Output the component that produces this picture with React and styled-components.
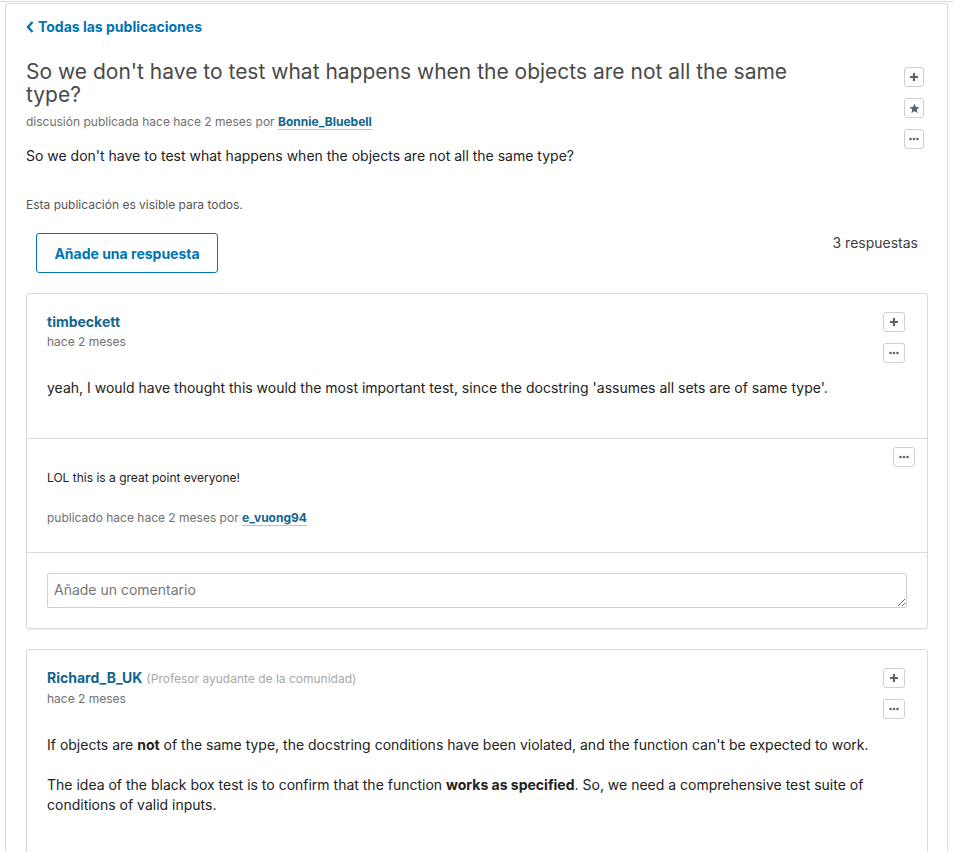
import React from 'react';
import styled, { createGlobalStyle } from 'styled-components';

const GlobalStyle = createGlobalStyle`
  body {
    margin: 0;
    background: #fff;
    font-family: Inter, 'Open Sans', sans-serif;
    color: #222;
  }
`;

const TopRule = styled.div`
  height: 1px;
  margin-top: 1px;
  background: #d9d9d9;
`;

const Page = styled.div`
  margin: 1px 5px 0 5px;
  border: 1px solid #dcdcdc;
  border-bottom: none;
  border-radius: 3px 3px 0 0;
  padding: 13px 19px 40px 20px;
  min-height: 840px;
  box-sizing: border-box;
`;

const BackLink = styled.a`
  display: inline-flex;
  align-items: center;
  gap: 4px;
  font-size: 14px;
  line-height: 20px;
  font-weight: 700;
  color: #0075b4;
  text-decoration: none;
  cursor: pointer;
`;

const PostHeader = styled.div`
  display: flex;
  justify-content: space-between;
  align-items: flex-start;
  margin-top: 23px;
`;

const PostMain = styled.div``;

const Title = styled.h1`
  margin: 0;
  max-width: 790px;
  font-size: 21px;
  line-height: 23px;
  font-weight: 400;
  color: #4a4a4a;
`;

const Meta = styled.div`
  margin-top: ${(p) => p.$top || 7}px;
  font-size: 12px;
  line-height: 17px;
  color: #707070;
`;

const UserLink = styled.a`
  font-weight: 700;
  color: #10658c;
  text-decoration: none;
  border-bottom: 1px solid #a9cadb;
`;

const Body = styled.p`
  margin: ${(p) => p.$top || 0}px 0 0 0;
  font-size: 14px;
  line-height: 20px;
  color: #222;
`;

const Visibility = styled.div`
  margin-top: 30px;
  font-size: 12px;
  line-height: 17px;
  color: #555;
`;

const ActionColumn = styled.div`
  display: flex;
  flex-direction: column;
  gap: ${(p) => p.$gap || 11}px;
  margin-top: ${(p) => p.$top || 0}px;
  margin-right: ${(p) => p.$right || 0}px;
`;

const IconBtn = styled.button`
  width: ${(p) => p.$w || 20}px;
  height: 20px;
  padding: 0;
  display: flex;
  align-items: center;
  justify-content: center;
  background: #fff;
  border: 1px solid #cfcfcf;
  border-radius: 3px;
  color: #5a646c;
  cursor: pointer;
`;

const ReplyRow = styled.div`
  display: flex;
  justify-content: space-between;
  align-items: flex-start;
  margin-top: 20px;
  padding-left: 10px;
  padding-right: 10px;
`;

const ReplyButton = styled.button`
  width: 182px;
  height: 40px;
  background: #fff;
  border: 1px solid #0075b4;
  border-radius: 3px;
  font-family: inherit;
  font-size: 14px;
  font-weight: 700;
  color: #0075b4;
  cursor: pointer;
`;

const Count = styled.div`
  font-size: 14px;
  line-height: 20px;
  color: #414141;
`;

const Card = styled.div`
  margin-top: 20px;
  border: 1px solid #d9d9d9;
  border-radius: 3px;
  box-shadow: 0 1px 2px rgba(0, 0, 0, 0.06);
  background: #fff;
`;

const ResponseSection = styled.div`
  display: flex;
  justify-content: space-between;
  align-items: flex-start;
  padding: 18px 22px ${(p) => p.$bottom || 40}px 20px;
`;

const ResponseMain = styled.div`
  flex: 1;
`;

const Author = styled.div`
  font-size: 14px;
  line-height: 20px;
`;

const AuthorName = styled.span`
  font-weight: 700;
  color: #10658c;
`;

const Role = styled.span`
  margin-left: 4px;
  font-size: 12px;
  color: #a8a8a8;
`;

const CommentSection = styled.div`
  border-top: 1px solid #dcdcdc;
  padding: 8px 12px 26px 20px;
`;

const CommentTop = styled.div`
  display: flex;
  justify-content: flex-end;
  margin-bottom: 2px;
`;

const CommentText = styled.div`
  font-size: 12px;
  line-height: 17px;
  color: #222;
`;

const NewComment = styled.div`
  border-top: 1px solid #dcdcdc;
  padding: 20px;
`;

const CommentInput = styled.textarea`
  display: block;
  width: 100%;
  height: 35px;
  box-sizing: border-box;
  border: 1px solid #cfcfcf;
  border-radius: 2px;
  padding: 7px 6px;
  font-family: inherit;
  font-size: 14px;
  line-height: 18px;
  color: #222;
  resize: vertical;

  &::placeholder {
    color: #777;
  }
`;

const PlusIcon = () => (
  <svg width="10" height="10" viewBox="0 0 10 10">
    <path d="M5 1v8M1 5h8" stroke="currentColor" strokeWidth="2.2" />
  </svg>
);

const StarIcon = () => (
  <svg width="11" height="11" viewBox="0 0 24 24">
    <path
      fill="currentColor"
      d="M12 1.5l3.2 7 7.6.8-5.7 5.1 1.6 7.5L12 18l-6.7 3.9 1.6-7.5L1.2 9.3l7.6-.8z"
    />
  </svg>
);

const DotsIcon = () => (
  <svg width="10" height="4" viewBox="0 0 10 4">
    <circle cx="1.5" cy="2" r="1.3" fill="currentColor" />
    <circle cx="5" cy="2" r="1.3" fill="currentColor" />
    <circle cx="8.5" cy="2" r="1.3" fill="currentColor" />
  </svg>
);

const ChevronLeft = () => (
  <svg width="8" height="12" viewBox="0 0 8 12">
    <path d="M6.5 1L2 6l4.5 5" fill="none" stroke="currentColor" strokeWidth="2.4" />
  </svg>
);

const App = () => (
  <>
    <GlobalStyle />
    <TopRule />
    <Page>
      <BackLink>
        <ChevronLeft />
        Todas las publicaciones
      </BackLink>

      <PostHeader>
        <PostMain>
          <Title>
            So we don't have to test what happens when the objects are not all the same type?
          </Title>
          <Meta>
            discusión publicada hace hace 2 meses por <UserLink>Bonnie_Bluebell</UserLink>
          </Meta>
          <Body $top={16}>
            So we don't have to test what happens when the objects are not all the same type?
          </Body>
          <Visibility>Esta publicación es visible para todos.</Visibility>
        </PostMain>
        <ActionColumn $top={7} $right={4}>
          <IconBtn><PlusIcon /></IconBtn>
          <IconBtn><StarIcon /></IconBtn>
          <IconBtn><DotsIcon /></IconBtn>
        </ActionColumn>
      </PostHeader>

      <ReplyRow>
        <ReplyButton>Añade una respuesta</ReplyButton>
        <Count>3 respuestas</Count>
      </ReplyRow>

      <Card>
        <ResponseSection>
          <ResponseMain>
            <Author><AuthorName>timbeckett</AuthorName></Author>
            <Meta $top={1}>hace 2 meses</Meta>
            <Body $top={28}>
              yeah, I would have thought this would the most important test, since the docstring 'assumes all sets are of same type'.
            </Body>
          </ResponseMain>
          <ActionColumn>
            <IconBtn $w={22}><PlusIcon /></IconBtn>
            <IconBtn $w={22}><DotsIcon /></IconBtn>
          </ActionColumn>
        </ResponseSection>

        <CommentSection>
          <CommentTop>
            <IconBtn $w={22}><DotsIcon /></IconBtn>
          </CommentTop>
          <CommentText>LOL this is a great point everyone!</CommentText>
          <Meta $top={23}>
            publicado hace hace 2 meses por <UserLink>e_vuong94</UserLink>
          </Meta>
        </CommentSection>

        <NewComment>
          <CommentInput placeholder="Añade un comentario" />
        </NewComment>
      </Card>

      <Card>
        <ResponseSection $bottom={60}>
          <ResponseMain>
            <Author>
              <AuthorName>Richard_B_UK</AuthorName>
              <Role>(Profesor ayudante de la comunidad)</Role>
            </Author>
            <Meta $top={1}>hace 2 meses</Meta>
            <Body $top={28}>
              If objects are <b>not</b> of the same type, the docstring conditions have been violated, and the function can't be expected to work.
            </Body>
            <Body $top={20}>
              The idea of the black box test is to confirm that the function <b>works as specified</b>. So, we need a comprehensive test suite of conditions of valid inputs.
            </Body>
          </ResponseMain>
          <ActionColumn>
            <IconBtn $w={22}><PlusIcon /></IconBtn>
            <IconBtn $w={22}><DotsIcon /></IconBtn>
          </ActionColumn>
        </ResponseSection>
      </Card>
    </Page>
  </>
);

export default App;
